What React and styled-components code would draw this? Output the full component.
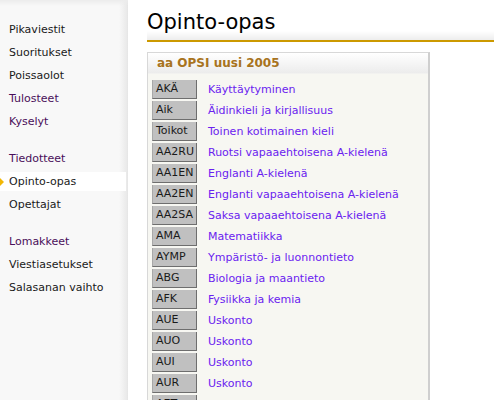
import React from 'react'
import styled, {createGlobalStyle} from 'styled-components'

const GlobalStyle = createGlobalStyle`
    html, body {
        margin: 0;
        padding: 0;
        background: #fff;
        font-family: "DejaVu Sans", Verdana, sans-serif;
        font-size: 11px;
    }
`

const menuGroups = [
    [
        {label: 'Pikaviestit'},
        {label: 'Suoritukset'},
        {label: 'Poissaolot'},
        {label: 'Tulosteet', visited: true},
        {label: 'Kyselyt', visited: true},
    ],
    [
        {label: 'Tiedotteet', visited: true},
        {label: 'Opinto-opas', active: true},
        {label: 'Opettajat'},
    ],
    [
        {label: 'Lomakkeet', visited: true},
        {label: 'Viestiasetukset'},
        {label: 'Salasanan vaihto'},
    ],
]

const courses = [
    ['AKÄ', 'Käyttäytyminen'],
    ['Aik', 'Äidinkieli ja kirjallisuus'],
    ['Toikot', 'Toinen kotimainen kieli'],
    ['AA2RU', 'Ruotsi vapaaehtoisena A-kielenä'],
    ['AA1EN', 'Englanti A-kielenä'],
    ['AA2EN', 'Englanti vapaaehtoisena A-kielenä'],
    ['AA2SA', 'Saksa vapaaehtoisena A-kielenä'],
    ['AMA', 'Matematiikka'],
    ['AYMP', 'Ympäristö- ja luonnontieto'],
    ['ABG', 'Biologia ja maantieto'],
    ['AFK', 'Fysiikka ja kemia'],
    ['AUE', 'Uskonto'],
    ['AUO', 'Uskonto'],
    ['AUI', 'Uskonto'],
    ['AUR', 'Uskonto'],
    ['AET', 'Elämänkatsomustieto'],
]

function App() {
    return (
        <Page>
            <GlobalStyle />
            <Sidebar>
                {menuGroups.map((group, gi) => (
                    <MenuGroup key={gi}>
                        {group.map(item => (
                            <MenuItem key={item.label} $active={item.active} $visited={item.visited}>
                                {item.label}
                            </MenuItem>
                        ))}
                    </MenuGroup>
                ))}
            </Sidebar>
            <Main>
                <Title>Opinto-opas</Title>
                <Box>
                    <BoxHeader>aa OPSI uusi 2005</BoxHeader>
                    <BoxBody>
                        {courses.map(([code, name]) => (
                            <Row key={code}>
                                <Code>{code}</Code>
                                <CourseLink>{name}</CourseLink>
                            </Row>
                        ))}
                    </BoxBody>
                </Box>
            </Main>
        </Page>
    )
}

export default App

const Page = styled.div`
    display: flex;
    height: 400px;
    overflow: hidden;
`

const Sidebar = styled.div`
    width: 128px;
    flex-shrink: 0;
    padding-top: 20px;
    box-sizing: border-box;
    background:
        linear-gradient(to bottom, #ececec 0, rgba(248,248,248,0) 6px),
        linear-gradient(to right, #f8f8f8 0, #f8f8f8 119px, #e9e9e9 127px, #e4e4e4 128px);
    display: flex;
    flex-direction: column;
    gap: 18px;
`

const MenuGroup = styled.div`
    display: flex;
    flex-direction: column;
    gap: 4px;
`

const MenuItem = styled.div`
    position: relative;
    height: 19px;
    line-height: 19px;
    width: 126px;
    padding-left: 9px;
    box-sizing: border-box;
    color: ${p => (p.$visited ? '#4a0f5a' : '#1a1a1a')};
    background: ${p => (p.$active ? '#fff' : 'transparent')};

    &::before {
        content: '';
        display: ${p => (p.$active ? 'block' : 'none')};
        position: absolute;
        left: 0;
        top: 6px;
        border-top: 4px solid transparent;
        border-bottom: 4px solid transparent;
        border-left: 4px solid #f2b705;
    }
`

const Main = styled.div`
    flex: 1;
    padding-left: 19px;
    display: flex;
    flex-direction: column;
`

const Title = styled.h1`
    flex-shrink: 0;
    margin: 0;
    height: 42px;
    padding-top: 10px;
    box-sizing: border-box;
    font-size: 21px;
    font-weight: normal;
    line-height: 25px;
    color: #000;
    border-bottom: 2px solid #cc9900;
    background: linear-gradient(to bottom, #fff 0, #fff 31px, #ededed 40px);
`

const Box = styled.div`
    flex-shrink: 0;
    margin-top: 10px;
    width: 280px;
    border: 1px solid #d8d8d8;
    border-right: 2px solid #cfcfcf;
    background: #f7f7f2;
`

const BoxHeader = styled.div`
    height: 20px;
    line-height: 20px;
    padding-left: 9px;
    font-weight: bold;
    font-size: 12px;
    color: #a87320;
    background: linear-gradient(to bottom, #fff, #ececec);
    border-bottom: 1px solid #f2f2f0;
`

const BoxBody = styled.div`
    padding: 6px 0 0 4px;
    display: flex;
    flex-direction: column;
    gap: 2px;
`

const Row = styled.div`
    display: flex;
    align-items: center;
    height: 19px;
    flex-shrink: 0;
`

const Code = styled.div`
    width: 45px;
    height: 19px;
    line-height: 18px;
    box-sizing: border-box;
    padding-left: 3px;
    background: #c0c0c0;
    color: #1a1a1a;
    border-left: 1px solid #a8a8a8;
    border-right: 1px solid #6e6e6e;
    border-bottom: 1px solid #6e6e6e;
`

const CourseLink = styled.a`
    margin-left: 11px;
    color: #6a22f0;
    text-decoration: none;
    cursor: pointer;
`
